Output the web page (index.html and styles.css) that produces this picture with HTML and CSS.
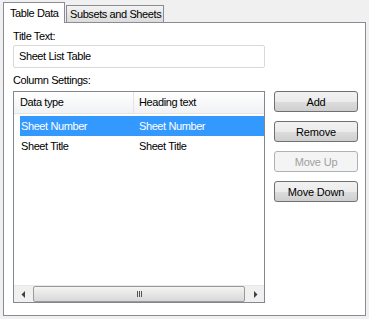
FILE: index.html
```html
<!DOCTYPE html>
<html lang="en">
<head>
    <meta charset="UTF-8">
    <title>Table Data</title>
    <link rel="stylesheet" href="styles.css">
</head>
<body>
    <div class="window">
        <div class="tabs">
            <div class="tab active">Table Data</div>
            <div class="tab">Subsets and Sheets</div>
        </div>
        <div class="panel">
            <div class="field-label">Title Text:</div>
            <div class="text-input">Sheet List Table</div>
            <div class="field-label">Column Settings:</div>
            <div class="settings">
                <div class="list-box">
                    <div class="list-head">
                        <div class="col col-type">Data type</div>
                        <div class="col col-heading">Heading text</div>
                    </div>
                    <div class="list-rows">
                        <div class="row selected">
                            <div class="col col-type">Sheet Number</div>
                            <div class="col col-heading">Sheet Number</div>
                        </div>
                        <div class="row">
                            <div class="col col-type">Sheet Title</div>
                            <div class="col col-heading">Sheet Title</div>
                        </div>
                    </div>
                    <!-- horizontal scrollbar -->
                    <div class="hscroll">
                        <div class="arrow">
                            <svg width="5" height="7" viewBox="0 0 5 7"><path d="M4 0 L0.5 3.5 L4 7 Z" fill="#404040"/></svg>
                        </div>
                        <div class="thumb">
                            <span class="grip"></span><span class="grip"></span><span class="grip"></span>
                        </div>
                        <div class="arrow">
                            <svg width="5" height="7" viewBox="0 0 5 7"><path d="M1 0 L4.5 3.5 L1 7 Z" fill="#404040"/></svg>
                        </div>
                    </div>
                </div>
                <div class="buttons">
                    <button class="btn">Add</button>
                    <button class="btn">Remove</button>
                    <button class="btn" disabled>Move Up</button>
                    <button class="btn">Move Down</button>
                </div>
            </div>
        </div>
    </div>
</body>
</html>
```

FILE: styles.css
```css
body {
    margin: 0;
    background-color: #f0f0f0;
    font-family: "Liberation Sans", Arial, sans-serif;
    font-size: 11px;
    letter-spacing: -0.4px;
    color: #000;
}
.window {
    padding: 2px 0 0 3px;
    width: 363px;
}
/* Tab strip */
.tabs {
    display: flex;
    align-items: flex-end;
    height: 20px;
}
.tab {
    height: 16px;
    line-height: 17px;
    padding: 0 2px 0 3px;
    border: 1px solid #898c95;
    border-bottom: none;
    background: linear-gradient(#f3f3f3, #dcdcdc);
    white-space: nowrap;
}
.tab.active {
    position: relative;
    z-index: 1;
    height: 20px;
    line-height: 20px;
    width: 54px;
    padding: 0 0 0 6px;
    margin-bottom: -1px;
    margin-right: 1px;
    background: #fff;
}
.panel {
    border: 1px solid #898c95;
    background: #fff;
    height: 286px;
    padding: 6px 0 0 9px;
}
.field-label {
    height: 15px;
    line-height: 15px;
    margin-bottom: 1px;
}
.text-input {
    width: 240px;
    height: 21px;
    line-height: 21px;
    padding: 0 5px;
    border: 1px solid #d9d9d9;
    border-radius: 2px;
    margin-bottom: 5px;
}
.settings {
    display: flex;
    margin-top: 3px;
}
/* List view */
.list-box {
    width: 250px;
    height: 210px;
    border: 1px solid #828790;
    display: flex;
    flex-direction: column;
}
.list-head {
    display: flex;
    height: 21px;
    line-height: 21px;
    background: linear-gradient(#ffffff, #f1f2f4);
    border-bottom: 1px solid #e5e5e5;
}
.col {
    white-space: nowrap;
    overflow: hidden;
}
.list-head .col-type {
    width: 113px;
    padding-left: 6px;
    border-right: 1px solid #e3e4e6;
}
.list-head .col-heading {
    padding-left: 5px;
}
.col-heading {
    flex: 1;
}
.list-rows {
    flex: 1;
    padding-top: 2px;
}
.row {
    display: flex;
    height: 20px;
    line-height: 20px;
    margin-left: 6px;
    padding-left: 1px;
}
.row .col-type {
    width: 118px;
}
.row.selected {
    background: #3399ff;
    color: #fff;
}
.hscroll {
    display: flex;
    height: 16px;
    background: #f0f0f0;
    border-top: 1px solid #e8e8e8;
}
.arrow {
    width: 18px;
    display: flex;
    align-items: center;
    justify-content: center;
}
.thumb {
    flex: 1;
    margin: 0 1px;
    border: 1px solid #9a9a9a;
    border-radius: 2px;
    background: linear-gradient(#f4f4f4, #d8d8d8);
    display: flex;
    align-items: center;
    justify-content: center;
    gap: 1px;
}
.grip {
    width: 1px;
    height: 6px;
    background: #555;
}
/* Buttons */
.buttons {
    display: flex;
    flex-direction: column;
    gap: 9px;
    margin-left: 9px;
}
.btn {
    width: 84px;
    height: 21px;
    padding: 0;
    font-family: inherit;
    font-size: 11px;
    letter-spacing: -0.2px;
    color: #000;
    border: 1px solid #707070;
    border-radius: 3px;
    background: linear-gradient(#f2f2f2 0%, #ebebeb 50%, #dddddd 51%, #cfcfcf 100%);
}
.btn:disabled {
    color: #a0a0a0;
    border-color: #adb2b5;
    background: #f4f4f4;
}
```
